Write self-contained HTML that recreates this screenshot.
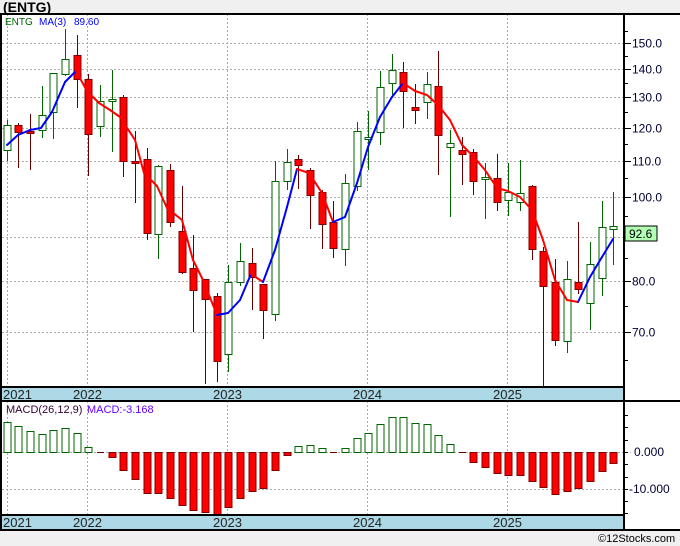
<!DOCTYPE html>
<html><head><meta charset="utf-8"><style>
html,body{margin:0;padding:0;background:#f0f0f0;}
svg{display:block;font-family:"Liberation Sans",sans-serif;}
</style></head><body>
<svg id="s" width="680" height="546" xmlns="http://www.w3.org/2000/svg">
<rect x="0" y="0" width="680" height="546" fill="#f0f0f0"/>
<rect x="1" y="14" width="679" height="516" fill="#fff"/>
<text x="3" y="12" font-size="14" font-weight="bold" fill="#000">(ENTG)</text>
<g id="grid" stroke="#aaa" stroke-dasharray="2,2" stroke-width="1"></g>
<rect x="1" y="387" width="623" height="14" fill="#add8e6"/>
<rect x="1" y="515" width="623" height="15" fill="#add8e6"/>
<g id="g"></g>
<g stroke="#000" stroke-width="2" fill="none">
<line x1="0" y1="14" x2="680" y2="14"/>
<line x1="1" y1="14" x2="1" y2="530"/>
<line x1="624" y1="14" x2="624" y2="530"/>
<line x1="0" y1="530" x2="680" y2="530"/>
<line x1="1" y1="387" x2="624" y2="387"/>
<line x1="1" y1="401" x2="680" y2="401"/>
<line x1="1" y1="515" x2="624" y2="515"/>
</g>
<g font-size="13" fill="#222">
<text x="3" y="399">2021</text><text x="73" y="399">2022</text><text x="213" y="399">2023</text><text x="353" y="399">2024</text><text x="493" y="399">2025</text>
<text x="3" y="527">2021</text><text x="73" y="527">2022</text><text x="213" y="527">2023</text><text x="353" y="527">2024</text><text x="493" y="527">2025</text>
</g>
<g font-size="10">
<text x="5" y="25" fill="#006400">ENTG</text><text x="39" y="25" fill="#0000ff">MA(3)</text><text x="74" y="25" fill="#0000ff">89.60</text>
</g>
<g font-size="11">
<text x="6" y="413" fill="#330033">MACD(26,12,9)</text><text x="87" y="413" fill="#6600ff">MACD:-3.168</text>
</g>
<g font-size="12" fill="#000033" id="ax"></g>
<rect x="625" y="226" width="32" height="15" fill="#b3ffb3" stroke="#000" stroke-width="1"/>
<text x="629" y="238" font-size="12" fill="#000">92.6</text>
<text x="598" y="542" font-size="11" fill="#000">©12Stocks.com</text>
</svg>
<script>
const NS="http://www.w3.org/2000/svg";
function el(p,t,a,txt){const e=document.createElementNS(NS,t);for(const k in a)e.setAttribute(k,a[k]);if(txt)e.textContent=txt;p.appendChild(e);return e;}
const g=document.getElementById('g'),grid=document.getElementById('grid'),ax=document.getElementById('ax');
const py=p=>1942-379*Math.log(p);
[150,140,130,120,110,100,90,80,70].forEach(p=>{const y=Math.round(py(p))+.5;el(grid,'line',{x1:2,y1:y,x2:624,y2:y});
 if(p!=90){el(ax,'line',{x1:624,y1:y,x2:631,y2:y,stroke:'#000'});el(ax,'text',{x:632,y:y+4},p.toFixed(1));}});
for(let p=65;p<=155;p+=5){const y=Math.round(py(p))+.5;el(ax,'line',{x1:624,y1:y,x2:628,y2:y,stroke:'#000'});}
[7,87,227,367,507].forEach(x=>{el(grid,'line',{x1:x+.5,y1:14,x2:x+.5,y2:387});el(grid,'line',{x1:x+.5,y1:401,x2:x+.5,y2:515});});
[452,489].forEach(y=>el(grid,'line',{x1:2,y1:y+.5,x2:631,y2:y+.5}));
el(ax,'text',{x:634,y:456},'0.000');
el(ax,'text',{x:629,y:493},'-10.000');
for(let y=415;y<515;y+=12.3){el(ax,'line',{x1:624,y1:Math.round(y)+.5,x2:628,y2:Math.round(y)+.5,stroke:'#000'});}
const C=[[7,120,161,125,150,1],[18,123,168,125,132,0],[30,114,170,131,133,0],[42,86,138,115,130,1],[53,73,139,73,112,1],[65,29,76,59,74,1],[77,35,108,55,79,0],[88,74,176,79,134,0],[100,85,137,101,126,1],[112,70,152,99,101,1],[123,95,177,97,161,0],[135,131,203,161,163,0],[147,148,240,159,233,0],[158,165,259,166,234,1],[170,164,227,170,222,0],[182,186,274,231,272,0],[193,235,332,268,290,0],[205,279,384,279,299,0],[217,293,382,296,361,0],[228,265,372,282,354,1],[240,243,286,261,282,1],[252,248,310,263,277,0],[263,284,339,284,310,0],[275,161,321,181,314,1],[287,149,190,162,181,1],[298,155,189,159,165,0],[310,168,229,170,195,0],[322,190,249,192,224,0],[333,201,258,222,248,0],[345,174,266,183,249,1],[357,122,191,131,186,1],[368,111,170,137,139,1],[380,71,145,87,132,1],[392,54,95,70,83,1],[403,62,128,72,91,0],[415,84,124,107,110,0],[427,72,119,84,102,1],[438,51,175,86,135,0],[450,130,217,143,147,1],[462,137,185,150,154,0],[473,149,195,152,181,0],[485,163,219,177,179,1],[497,154,211,178,202,0],[508,163,216,192,200,1],[520,160,211,193,202,1],[532,185,260,186,249,0],[543,247,387,251,286,0],[555,259,346,282,340,0],[567,261,353,279,341,1],[578,222,294,282,289,0],[590,242,330,264,303,1],[602,201,296,227,278,1],[613,192,265,226,229,1]];
C.forEach(c=>{const [x,h,l,t,b,u]=c;const col=u?'#006400':'#660000';
 el(g,'line',{x1:x+.5,y1:h,x2:x+.5,y2:l,stroke:col,'stroke-width':1});
 el(g,'rect',{x:x-3,y:t+.5,width:7,height:Math.max(1,b-t),fill:u?'#fff':'#ff0000',stroke:u?'#006400':'#800000','stroke-width':1});});
const M=[[7,145],[18,135],[30,130],[41,128],[52,112],[65,82],[76,71],[87,91],[99,103],[110,110],[120,117],[135,140],[144,173],[157,186],[167,208],[182,220],[193,260],[203,280],[215,310],[217,315],[228,313],[240,300],[251,274],[263,282],[275,250],[287,207],[297,169],[309,173],[322,193],[333,222],[345,217],[357,183],[368,147],[380,117],[392,97],[403,83],[415,91],[427,95],[438,105],[450,120],[462,145],[473,156],[485,170],[497,188],[508,191],[520,197],[532,210],[543,240],[555,280],[567,300],[578,302],[590,277],[602,257],[613,239]];
for(let i=1;i<M.length;i++){el(g,'line',{x1:M[i-1][0],y1:M[i-1][1],x2:M[i][0],y2:M[i][1],stroke:M[i][1]>M[i-1][1]?'#ff0000':'#0000ff','stroke-width':2,'stroke-linecap':'round'});}
const H=[422,426,431,434,430,428,433,447,452,457,470,479,493,493,498,505,510,512,515,507,498,491,488,470,455,446,445,448,452,448,438,433,424,417,417,423,424,435,444,452,462,467,473,475,475,481,487,494,491,488,481,471,463];
H.forEach((y,i)=>{const x=C[i][0];
 if(Math.abs(y-452)<1){el(g,'line',{x1:x-3,y1:452.5,x2:x+4,y2:452.5,stroke:'#660000'});return;}
 if(y<452)el(g,'rect',{x:x-3,y:y+.5,width:7,height:452-y,fill:'#fff',stroke:'#006400'});
 else el(g,'rect',{x:x-3,y:452.5,width:7,height:y-452,fill:'#ff0000',stroke:'#800000'});});
</script>
</body></html>
